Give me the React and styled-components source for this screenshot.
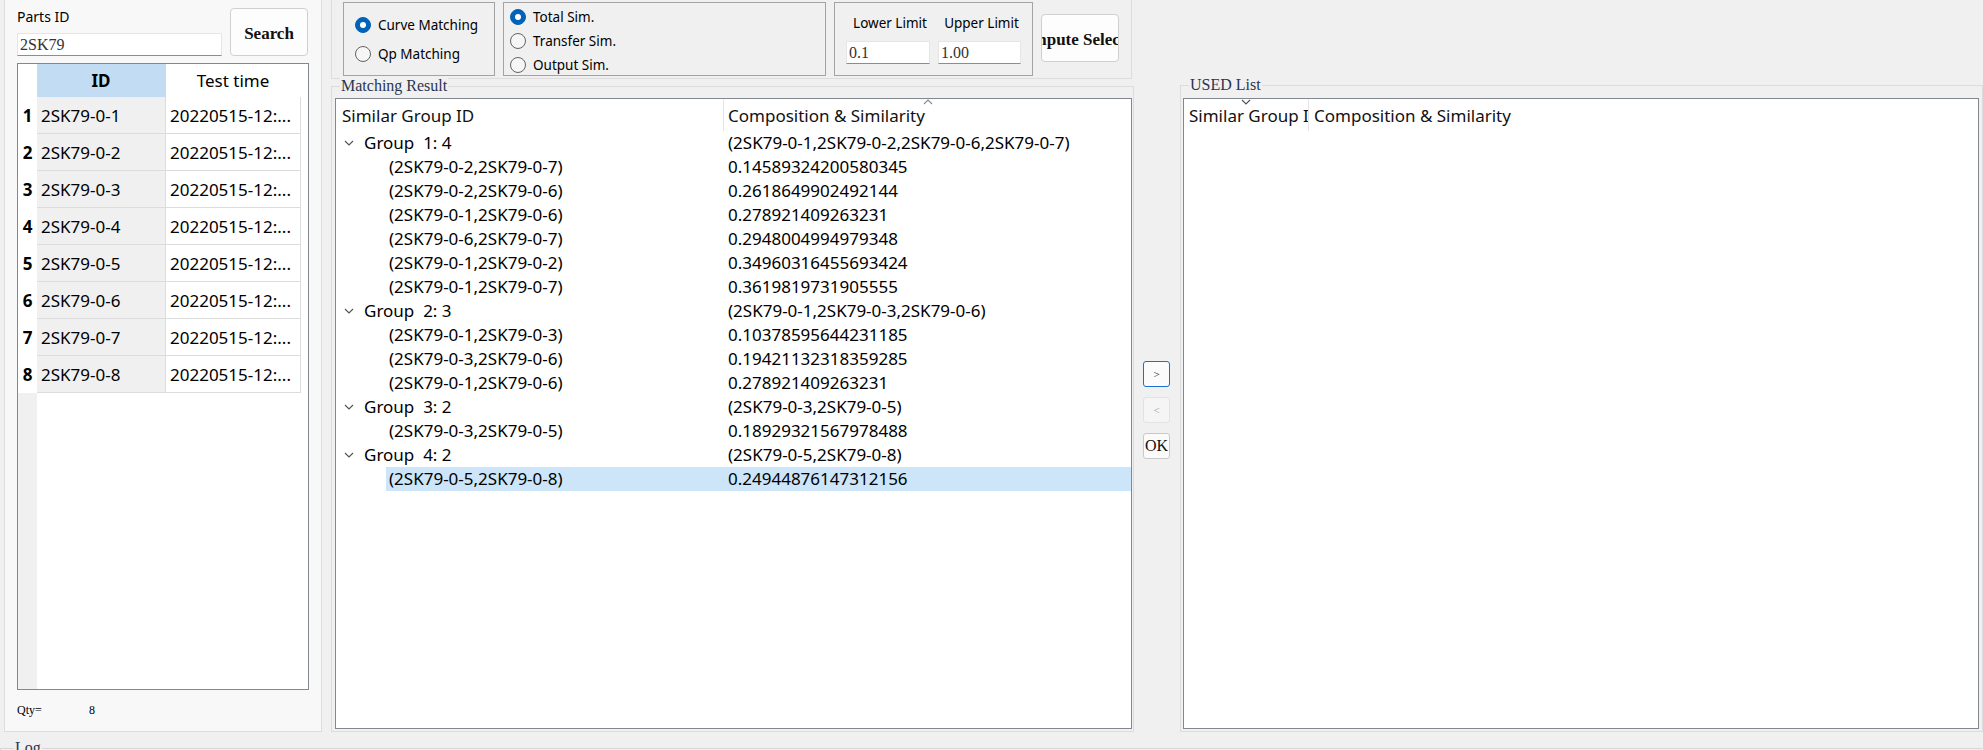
import React from 'react';
import styled, { createGlobalStyle } from 'styled-components';

const SANS = `"Noto Sans", "Open Sans", sans-serif`;
const SERIF = `"Liberation Serif", "Times New Roman", serif`;

const GlobalStyle = createGlobalStyle`
  html, body {
    margin: 0;
    padding: 0;
  }
  body {
    background: #f0f0f0;
    font-family: ${SANS};
    color: #000;
    overflow: hidden;
  }
  * {
    box-sizing: border-box;
  }
`;

const parts = [1, 2, 3, 4, 5, 6, 7, 8].map((n) => ({
  no: n,
  id: `2SK79-0-${n}`,
  time: '20220515-12:...',
}));

const groups = [
  {
    name: 'Group  1: 4',
    comp: '(2SK79-0-1,2SK79-0-2,2SK79-0-6,2SK79-0-7)',
    pairs: [
      ['(2SK79-0-2,2SK79-0-7)', '0.14589324200580345'],
      ['(2SK79-0-2,2SK79-0-6)', '0.2618649902492144'],
      ['(2SK79-0-1,2SK79-0-6)', '0.278921409263231'],
      ['(2SK79-0-6,2SK79-0-7)', '0.2948004994979348'],
      ['(2SK79-0-1,2SK79-0-2)', '0.34960316455693424'],
      ['(2SK79-0-1,2SK79-0-7)', '0.3619819731905555'],
    ],
  },
  {
    name: 'Group  2: 3',
    comp: '(2SK79-0-1,2SK79-0-3,2SK79-0-6)',
    pairs: [
      ['(2SK79-0-1,2SK79-0-3)', '0.10378595644231185'],
      ['(2SK79-0-3,2SK79-0-6)', '0.19421132318359285'],
      ['(2SK79-0-1,2SK79-0-6)', '0.278921409263231'],
    ],
  },
  {
    name: 'Group  3: 2',
    comp: '(2SK79-0-3,2SK79-0-5)',
    pairs: [['(2SK79-0-3,2SK79-0-5)', '0.18929321567978488']],
  },
  {
    name: 'Group  4: 2',
    comp: '(2SK79-0-5,2SK79-0-8)',
    pairs: [['(2SK79-0-5,2SK79-0-8)', '0.24944876147312156', true]],
  },
];

// little chevrons drawn by the list controls
const Chevron = ({ up }) => (
  <svg width="10" height="6" viewBox="0 0 10 6">
    <polyline
      points={up ? '1,5 5,1 9,5' : '1,1 5,5 9,1'}
      fill="none"
      stroke={up ? '#8a8a8a' : '#505050'}
      strokeWidth="1.1"
    />
  </svg>
);

const App = () => {
  return (
    <Page>
      <GlobalStyle />
      <Main>
        <LeftPanel>
          <SearchRow>
            <Field>
              <FieldLabel>Parts ID</FieldLabel>
              <TextBox defaultValue="2SK79" $width={205} />
            </Field>
            <PlainButton $bold $width={78} $height={48}>
              Search
            </PlainButton>
          </SearchRow>
          <DataGrid>
            <GridRow $height={33}>
              <RowHead />
              <GridCell $head $active>
                ID
              </GridCell>
              <GridCell $head>Test time</GridCell>
            </GridRow>
            {parts.map((p) => (
              <GridRow key={p.no} $height={37}>
                <RowHead>{p.no}</RowHead>
                <GridCell $shade>{p.id}</GridCell>
                <GridCell>{p.time}</GridCell>
              </GridRow>
            ))}
          </DataGrid>
          <QtyRow>
            <QtyLabel>Qty=</QtyLabel>
            <span>8</span>
          </QtyRow>
        </LeftPanel>

        <Center>
          <TopBar>
            <OptionBox $width={152} $pad="0 0 0 11px" $center $gap={9}>
              <Radio checked label="Curve Matching" />
              <Radio label="Qp Matching" />
            </OptionBox>
            <OptionBox $width={323} $pad="4px 0 0 6px" $gap={4}>
              <Radio checked label="Total Sim." />
              <Radio label="Transfer Sim." />
              <Radio label="Output Sim." />
            </OptionBox>
            <LimitBox>
              <LimitField>
                <SmallLabel>Lower Limit</SmallLabel>
                <TextBox defaultValue="0.1" $width={84} />
              </LimitField>
              <LimitField>
                <SmallLabel>Upper Limit</SmallLabel>
                <TextBox defaultValue="1.00" $width={83} />
              </LimitField>
            </LimitBox>
            <PlainButton $bold $width={78} $height={48} $top={12}>
              <Clip>Compute Selection</Clip>
            </PlainButton>
          </TopBar>

          <GroupBox $top={7} $pad="11px 1px 2px 3px">
            <Caption>Matching Result</Caption>
            <ListView>
              <ListHeader $first={388}>
                <HeadCell $pad={6}>Similar Group ID</HeadCell>
                <HeadCell $pad={4}>
                  <SortMark>
                    <Chevron up />
                  </SortMark>
                  Composition &amp; Similarity
                </HeadCell>
              </ListHeader>
              {groups.map((g) => (
                <React.Fragment key={g.name}>
                  <TreeRow>
                    <TreeName $indent={8}>
                      <Toggle>
                        <Chevron />
                      </Toggle>
                      {g.name}
                    </TreeName>
                    <TreeValue>{g.comp}</TreeValue>
                  </TreeRow>
                  {g.pairs.map(([pair, sim, selected]) => (
                    <TreeRow key={pair + sim} $selected={selected}>
                      <TreeName $indent={53}>{pair}</TreeName>
                      <TreeValue>{sim}</TreeValue>
                    </TreeRow>
                  ))}
                </React.Fragment>
              ))}
            </ListView>
          </GroupBox>
        </Center>

        <ArrowColumn>
          <SmallButton $variant="focus">&gt;</SmallButton>
          <SmallButton $variant="disabled">&lt;</SmallButton>
          <SmallButton $big>OK</SmallButton>
        </ArrowColumn>

        <GroupBox $top={85} $width={803} $pad="12px 3px 2px 2px">
          <Caption>USED List</Caption>
          <ListView>
            <ListHeader $first={125}>
              <HeadCell $pad={5}>
                <SortMark>
                  <Chevron />
                </SortMark>
                Similar Group ID
              </HeadCell>
              <HeadCell $pad={5}>Composition &amp; Similarity</HeadCell>
            </ListHeader>
          </ListView>
        </GroupBox>
      </Main>

      <LogBox>
        <Caption>Log</Caption>
      </LogBox>
    </Page>
  );
};

const Radio = ({ checked, label }) => (
  <RadioRow>
    <RadioDot $checked={checked} />
    {label}
  </RadioRow>
);

const Page = styled.div`
  width: 1983px;
  height: 750px;
  overflow: hidden;
`;

const Main = styled.div`
  display: flex;
  align-items: flex-start;
  height: 732px;
  padding-left: 4px;
`;

const LeftPanel = styled.div`
  width: 318px;
  height: 732px;
  background: #f8f8f8;
  border: 1px solid #dddddd;
  border-top: none;
  padding: 0 11px 0 12px;
  display: flex;
  flex-direction: column;
`;

const SearchRow = styled.div`
  display: flex;
  align-items: flex-start;
  gap: 8px;
  padding-top: 8px;
`;

const Field = styled.div`
  display: flex;
  flex-direction: column;
`;

const FieldLabel = styled.div`
  font-size: 14px;
  line-height: 18px;
  margin-bottom: 7px;
  color: #000;
`;

const TextBox = styled.input`
  width: ${(p) => p.$width}px;
  height: 23px;
  padding: 0 2px;
  margin: 0;
  border: 1px solid #e5e5e5;
  border-bottom-color: #8d8d8d;
  background: #fff;
  font-family: ${SERIF};
  font-size: 16px;
  color: #333;
  outline: none;
`;

const PlainButton = styled.button`
  width: ${(p) => p.$width}px;
  height: ${(p) => p.$height}px;
  margin-top: ${(p) => p.$top || 0}px;
  padding: 3px 3px 0;
  background: #fdfdfd;
  border: 1px solid #d0d0d0;
  border-radius: 4px;
  font-family: ${SERIF};
  font-size: 17px;
  font-weight: ${(p) => (p.$bold ? 700 : 400)};
  color: #111;
  display: flex;
  align-items: center;
  justify-content: center;
  overflow: hidden;
  flex-shrink: 0;
`;

const Clip = styled.span`
  white-space: nowrap;
  flex-shrink: 0;
`;

const DataGrid = styled.div`
  width: 292px;
  height: 627px;
  margin-top: 7px;
  border: 1px solid #828790;
  background: linear-gradient(to right, #f0f0f0 19px, #ffffff 19px);
  overflow: hidden;
`;

const GridRow = styled.div`
  display: grid;
  grid-template-columns: 19px 129px 135px;
  height: ${(p) => p.$height}px;
`;

const RowHead = styled.div`
  background: #fff;
  font-size: 17px;
  font-weight: 700;
  display: flex;
  align-items: center;
  justify-content: center;
`;

const GridCell = styled.div`
  display: flex;
  align-items: center;
  justify-content: ${(p) => (p.$head ? 'center' : 'flex-start')};
  padding-left: ${(p) => (p.$head ? 0 : 4)}px;
  font-size: 17px;
  font-weight: ${(p) => (p.$active ? 700 : 400)};
  white-space: nowrap;
  overflow: hidden;
  background: ${(p) => (p.$active ? '#c2ddf3' : p.$shade ? '#f0f0f0' : '#ffffff')};
  border-right: 1px solid #dcdcdc;
  border-bottom: ${(p) => (p.$head ? 'none' : '1px solid #dcdcdc')};
  border-right-color: ${(p) => (p.$head ? 'transparent' : '#dcdcdc')};
`;

const QtyRow = styled.div`
  display: flex;
  align-items: center;
  height: 40px;
  font-family: ${SERIF};
  font-size: 12px;
`;

const QtyLabel = styled.span`
  width: 72px;
`;

const Center = styled.div`
  width: 803px;
  margin-left: 9px;
  height: 732px;
  display: flex;
  flex-direction: column;
`;

const TopBar = styled.div`
  width: 801px;
  height: 79px;
  flex-shrink: 0;
  border: 1px solid #dddddd;
  border-top: none;
  display: flex;
  align-items: flex-start;
  gap: 8px;
  padding: 2px 0 0 11px;
`;

const OptionBox = styled.div`
  width: ${(p) => p.$width}px;
  height: 74px;
  border: 1px solid #a3a3a3;
  padding: ${(p) => p.$pad};
  display: flex;
  flex-direction: column;
  justify-content: ${(p) => (p.$center ? 'center' : 'flex-start')};
  gap: ${(p) => p.$gap}px;
  flex-shrink: 0;
`;

const RadioRow = styled.div`
  display: flex;
  align-items: center;
  height: 20px;
  font-size: 13.5px;
  color: #000;
  white-space: nowrap;
`;

const RadioDot = styled.span`
  width: 16px;
  height: 16px;
  border-radius: 50%;
  margin-right: 7px;
  flex-shrink: 0;
  position: relative;
  background: ${(p) => (p.$checked ? '#0063b8' : '#f6f6f6')};
  border: 1px solid ${(p) => (p.$checked ? '#0063b8' : '#636363')};

  &::after {
    content: '';
    display: ${(p) => (p.$checked ? 'block' : 'none')};
    position: absolute;
    left: 4px;
    top: 4px;
    width: 6px;
    height: 6px;
    border-radius: 50%;
    background: #fff;
  }
`;

const LimitBox = styled.div`
  width: 199px;
  height: 74px;
  border: 1px solid #a3a3a3;
  padding: 10px 0 0 11px;
  display: flex;
  gap: 8px;
  flex-shrink: 0;
`;

const LimitField = styled.div`
  display: flex;
  flex-direction: column;
  align-items: center;
`;

const SmallLabel = styled.div`
  font-size: 13.5px;
  line-height: 20px;
  margin: 0 0 8px 4px;
  white-space: nowrap;
`;

const GroupBox = styled.div`
  position: relative;
  width: ${(p) => (p.$width ? `${p.$width}px` : 'auto')};
  flex: ${(p) => (p.$width ? 'none' : '1')};
  height: ${(p) => (p.$width ? `${732 - p.$top}px` : 'auto')};
  margin-top: ${(p) => p.$top}px;
  border: 1px solid #dcdcdc;
  padding: ${(p) => p.$pad};
  display: flex;
  flex-direction: column;
`;

const Caption = styled.span`
  position: absolute;
  top: -10px;
  left: 8px;
  padding: 0 1px;
  background: #f0f0f0;
  font-family: ${SERIF};
  font-size: 16px;
  line-height: 18px;
  color: #2a3550;
`;

const ListView = styled.div`
  flex: 1;
  background: #fff;
  border: 1px solid #828790;
  overflow: hidden;
`;

const ListHeader = styled.div`
  display: grid;
  grid-template-columns: ${(p) => p.$first}px 1fr;
  height: 32px;
`;

const HeadCell = styled.div`
  position: relative;
  display: flex;
  align-items: center;
  padding-left: ${(p) => p.$pad}px;
  font-size: 17px;
  color: #111;
  white-space: nowrap;
  overflow: hidden;

  &:first-child {
    border-right: 1px solid #e5e5e5;
  }
`;

const SortMark = styled.span`
  position: absolute;
  top: 0;
  left: 50%;
  transform: translateX(-50%);
  display: flex;
  line-height: 0;
`;

const TreeRow = styled.div`
  display: grid;
  grid-template-columns: 388px 1fr;
  height: 24px;
  font-size: 17px;
  line-height: 24px;
  white-space: pre;
  background: ${(p) =>
    p.$selected ? 'linear-gradient(to right, transparent 50px, #cce5f9 50px)' : 'transparent'};
`;

const TreeName = styled.div`
  display: flex;
  align-items: center;
  padding-left: ${(p) => p.$indent}px;
`;

const Toggle = styled.span`
  display: flex;
  width: 20px;
  line-height: 0;
`;

const TreeValue = styled.div`
  padding-left: 4px;
`;

const ArrowColumn = styled.div`
  width: 46px;
  padding: 361px 0 0 9px;
  display: flex;
  flex-direction: column;
  gap: 10px;
  flex-shrink: 0;
`;

const SmallButton = styled.button`
  width: 27px;
  height: 26px;
  padding: 0;
  border-radius: 3px;
  font-family: ${SERIF};
  font-size: ${(p) => (p.$big ? 16 : 11)}px;
  color: ${(p) => (p.$variant === 'disabled' ? '#9a9a9a' : '#111')};
  background: ${(p) => (p.$variant === 'disabled' ? '#f5f5f5' : '#fbfbfb')};
  border: ${(p) =>
    p.$variant === 'focus'
      ? '1.5px solid #1a6fd0'
      : p.$variant === 'disabled'
      ? '1px solid #e2e2e2'
      : '1px solid #c9c9c9'};
  display: flex;
  align-items: center;
  justify-content: center;
`;

const LogBox = styled.div`
  position: relative;
  margin: 16px 1px 0 0;
  height: 30px;
  border-top: 1px solid #d7d7d7;
  border-left: 1px solid #d7d7d7;

  & > span {
    left: 13px;
  }
`;

export default App;
